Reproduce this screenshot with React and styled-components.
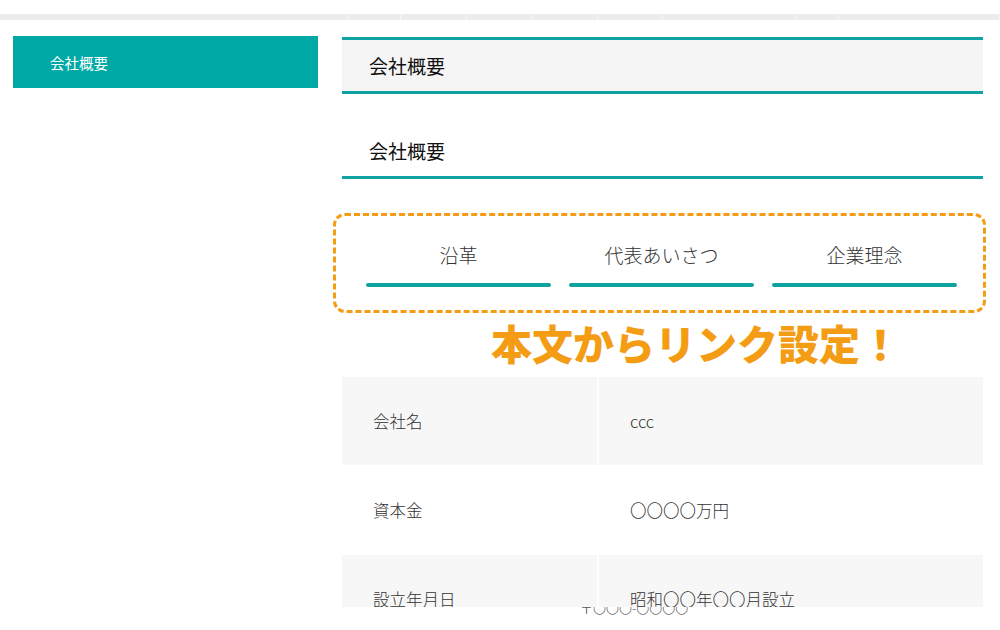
import React from "react"
import styled, { createGlobalStyle } from "styled-components"

const TEAL = "#00a9a5"
const LINE = "#0ea3a1"
const ORANGE = "#f49c14"

const FONT = `"Noto Sans CJK JP", "Noto Sans", sans-serif`

const navStops = [0, 348, 401, 467, 533, 598, 663, 796, 839, 1000]

const links = ["沿革", "代表あいさつ", "企業理念"]

const rows = [
  { label: "会社名", value: "ccc", shade: true },
  { label: "資本金", value: "〇〇〇〇万円" },
  { label: "設立年月日", value: "昭和〇〇年〇〇月設立", shade: true },
]

const App = () => {
  return (
    <>
      <GlobalStyle />
      <TopBar>
        {navStops.slice(1).map((x, i) => (
          <TopSegment key={x} width={x - navStops[i]} />
        ))}
      </TopBar>
      <Layout>
        <Sidebar>
          <SideItem>会社概要</SideItem>
        </Sidebar>
        <Main>
          <PageTitle>会社概要</PageTitle>
          <SectionTitle>会社概要</SectionTitle>
          <LinkBox>
            {links.map(l => (
              <AnchorLink key={l}>
                <AnchorText>{l}</AnchorText>
                <AnchorBar />
              </AnchorLink>
            ))}
          </LinkBox>
          <Callout>本文からリンク設定！</Callout>
          <Table>
            {rows.map(r => (
              <Row key={r.label} shade={r.shade}>
                <Cell>{r.label}</Cell>
                <Cell>{r.value}</Cell>
              </Row>
            ))}
          </Table>
          <Peek>
            <PeekText>〒〇〇〇-〇〇〇〇</PeekText>
          </Peek>
        </Main>
      </Layout>
    </>
  )
}

const GlobalStyle = createGlobalStyle`
  html, body {
    margin: 0;
    padding: 0;
    background: #fff;
    font-family: ${FONT};
    overflow: hidden;
  }
`

const TopBar = styled.div`
  display: flex;
  margin-top: 14px;
  height: 6px;
  background: #ececec;
`

const TopSegment = styled.div`
  flex: 0 0 ${p => p.width}px;
  box-sizing: border-box;
  border-right: 1px solid #f6f6f6;
`

const Layout = styled.div`
  display: flex;
  align-items: flex-start;
  gap: 24px;
  padding: 16px 0 0 13px;
`

const Sidebar = styled.nav`
  width: 305px;
`

const SideItem = styled.div`
  height: 52px;
  display: flex;
  align-items: center;
  padding-left: 37px;
  background: ${TEAL};
  color: #fff;
  font-size: 14.5px;
  box-sizing: border-box;
`

const Main = styled.main`
  width: 641px;
  margin-top: 1px;
`

const PageTitle = styled.h1`
  margin: 0;
  height: 57px;
  display: flex;
  align-items: center;
  box-sizing: border-box;
  padding-left: 27px;
  background: #f5f5f5;
  border-top: 3px solid ${LINE};
  border-bottom: 3px solid ${LINE};
  font-size: 19px;
  font-weight: 400;
  color: #111;
`

const SectionTitle = styled.h2`
  margin: 0;
  padding: 43px 27px 12px;
  line-height: 27px;
  border-bottom: 3px solid ${LINE};
  font-size: 19px;
  font-weight: 400;
  color: #111;
`

const LinkBox = styled.div`
  display: grid;
  grid-template-columns: repeat(3, 185px);
  column-gap: 18px;
  height: 100px;
  box-sizing: border-box;
  margin: 34px -3px 0 -9px;
  padding: 25px 25px 0 30px;
  border: 3px dashed ${ORANGE};
  border-radius: 12px;
`

const AnchorLink = styled.a`
  display: flex;
  flex-direction: column;
  align-items: stretch;
  cursor: pointer;
`

const AnchorText = styled.span`
  text-align: center;
  font-size: 19px;
  line-height: 27px;
  font-weight: 300;
  color: #333;
`

const AnchorBar = styled.span`
  height: 4px;
  margin-top: 15px;
  border-radius: 2px;
  background: ${LINE};
`

const Callout = styled.div`
  margin: 10px 0 16px;
  padding-left: 149px;
  font-size: 41px;
  line-height: 38px;
  font-weight: 900;
  color: ${ORANGE};
`

const Table = styled.div`
  height: 230px;
  overflow: hidden;
`

const Row = styled.div`
  display: grid;
  grid-template-columns: 255px 1fr;
  height: 88px;
  background: ${p => (p.shade ? "#f7f7f7" : "#fff")};
  & + & {
    border-top: 1px solid #fff;
  }
`

const Cell = styled.div`
  display: flex;
  align-items: center;
  padding-left: 31px;
  font-size: 16.5px;
  font-weight: 300;
  color: #333;
  & + & {
    border-left: 2px solid #fff;
  }
`

const Peek = styled.div`
  height: 9px;
  overflow: hidden;
  padding-left: 238px;
`

const PeekText = styled.div`
  margin-top: -8px;
  font-size: 13px;
  line-height: 17px;
  font-weight: 300;
  color: #555;
`

export default App
